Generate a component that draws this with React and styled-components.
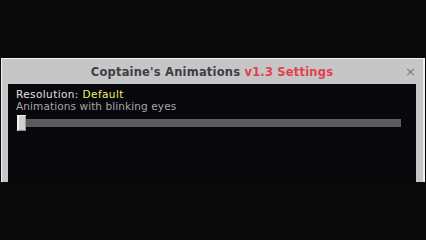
import styled, { createGlobalStyle } from 'styled-components';

const Global = createGlobalStyle`
  html, body {
    margin: 0;
    padding: 0;
    background: #0a0a0a;
  }
  #root {
    height: 240px;
    overflow: hidden;
  }
`;

const Screen = styled.div`
  height: 240px;
  padding-top: 58px;
  padding-left: 1px;
  box-sizing: border-box;
  background: #0a0a0a;
`;

const Panel = styled.div`
  width: 424px;
  height: 124px;
  box-sizing: border-box;
  background: #c6c6c6;
  border-top: 1px solid #f4f4f4;
  border-left: 1px solid #f0f0f0;
  border-right: 2px solid #f0f0f0;
  display: flex;
  flex-direction: column;
  padding: 0 7px 0 6px;
`;

const TitleBar = styled.div`
  height: 25px;
  display: flex;
  align-items: center;
  justify-content: center;
  position: relative;
`;

const Title = styled.span`
  font-family: 'DejaVu Sans', sans-serif;
  font-weight: bold;
  font-size: 11.5px;
  letter-spacing: 0.2px;
  color: #3e3e46;
  margin-left: 0;
`;

const Accent = styled.span`
  color: #e0404e;
`;

const Close = styled.span`
  position: absolute;
  right: 0px;
  top: 5px;
  font-family: 'DejaVu Sans', sans-serif;
  font-size: 13px;
  color: #7a7a7a;
`;

const Content = styled.div`
  flex: 1;
  background: #07070c;
  padding: 4px 8px 0 8px;
  font-family: 'DejaVu Sans', sans-serif;
  font-size: 10.5px;
  line-height: 12px;
`;

const Line = styled.div`
  color: ${(p) => p.color || '#e0e0e0'};
  letter-spacing: ${(p) => p.spacing || '0.4px'};
  white-space: nowrap;
`;

const Value = styled.span`
  color: #f4f06a;
`;

const SliderRow = styled.div`
  display: flex;
  align-items: center;
  margin-top: 3px;
  padding-left: 1px;
  width: 384px;
`;

const Thumb = styled.div`
  width: 9px;
  height: 16px;
  box-sizing: border-box;
  background: #cfcfcf;
  border-left: 2px solid #f2f2f2;
  border-top: 1px solid #f2f2f2;
  border-bottom: 1px solid #8a8a8a;
  border-right: 1px solid #9a9a9a;
`;

const Track = styled.div`
  flex: 1;
  height: 8px;
  background: #5c5c5c;
`;

export default function App() {
  return (
    <>
      <Global />
      <Screen>
        <Panel>
          <TitleBar>
            <Title>
              Coptaine's Animations <Accent>v1.3 Settings</Accent>
            </Title>
            <Close>×</Close>
          </TitleBar>
          <Content>
            <Line>
              Resolution: <Value>Default</Value>
            </Line>
            <Line color="#a8a8a8" spacing="0.1px">
              Animations with blinking eyes
            </Line>
            <SliderRow>
              <Thumb />
              <Track />
            </SliderRow>
          </Content>
        </Panel>
      </Screen>
    </>
  );
}
